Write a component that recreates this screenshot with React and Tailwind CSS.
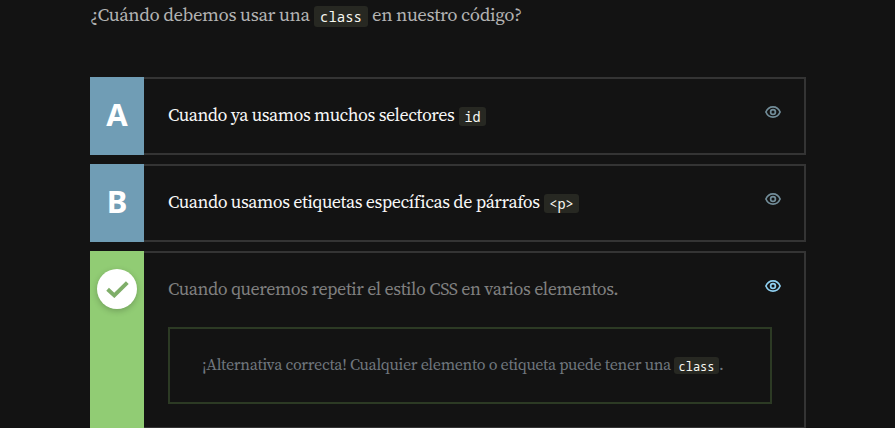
function Code({ children, className }) {
  return (
    <code
      className={`inline-flex shrink-0 items-center justify-center rounded-[3px] bg-[#272822] font-['Noto_Sans_Mono','DejaVu_Sans_Mono',monospace] tracking-normal text-[#f8f8f2] ${className}`}
    >
      {children}
    </code>
  );
}

function Eye({ className }) {
  return (
    <svg className={`h-3 w-4 shrink-0 ${className}`} viewBox="0 0 16 12" fill="none" stroke="currentColor" strokeWidth="1.7">
      <path d="M.9 6C2.300 2.700 5 .9 8 .9s5.700 1.800 7.100 5.100C13.700 9.300 11 11.100 8 11.100S2.300 9.300.9 6Z" />
      <circle cx="8" cy="6" r="2.400" />
    </svg>
  );
}

function Check() {
  return (
    <span className="mt-[18px] flex h-10 w-10 items-center justify-center rounded-full bg-white shadow-[0_2px_6px_rgba(0,0,0,0.22)]">
      <svg className="h-[17px] w-[23px]" viewBox="0 0 23 17" fill="none" stroke="#7fae69" strokeWidth="3.900">
        <path d="M1.600 8.200 8.300 14.400 21.300 1.600" />
      </svg>
    </span>
  );
}

function Letter({ children }) {
  return (
    <div className="flex h-[78px] w-[54px] shrink-0 items-center justify-center bg-[#709db5] pb-1 font-['Noto_Sans',sans-serif] text-[31px] leading-none font-bold text-white">
      {children}
    </div>
  );
}

function Option({ letter, text, textClass, code, codeClass }) {
  return (
    <section className="flex h-[78px]">
      <Letter>{letter}</Letter>
      <div className="flex flex-1 border-y-2 border-r-2 border-[#343434] pt-[20px] pr-[23px] pl-6">
        <p className="flex flex-1 items-start text-[18px] leading-[31px] whitespace-nowrap text-[#f8f8f8]">
          <span className={textClass}>{text}</span>
          <Code className={codeClass}>{code}</Code>
        </p>
        <Eye className="mt-[7px] text-[#728d99]" />
      </div>
    </section>
  );
}

export default function App() {
  return (
    <main className="h-[428px] w-[895px] overflow-hidden bg-[#131313] pl-[90px] font-['Source_Serif_4','Liberation_Serif',serif]">
      <div className="flex h-[77px] items-start text-[18.700px] leading-[30px] whitespace-nowrap text-[#b3b3b3]">
        <span className="w-[224px] tracking-[-0.370px]">¿Cuándo debemos usar una</span>
        <Code className="mt-[6px] h-[21px] w-[54px] text-[14px]">class</Code>
        <span className="ml-1 tracking-[-0.370px]">en nuestro código?</span>
      </div>

      <div className="flex w-[716px] flex-col gap-[9px]">
        <Option
          letter="A"
          text="Cuando ya usamos muchos selectores"
          textClass="w-[291px] tracking-[-0.450px]"
          code="id"
          codeClass="mt-2 h-[19px] w-[27px] pt-px text-[13.500px]"
        />
        <Option
          letter="B"
          text="Cuando usamos etiquetas específicas de párrafos"
          textClass="w-[376px] tracking-[-0.440px]"
          code="<p>"
          codeClass="mt-2 h-[19px] w-[35px] pt-px text-[13.500px]"
        />

        <section className="flex h-[178px]">
          <div className="flex w-[54px] shrink-0 justify-center bg-[#91cc74]">
            <Check />
          </div>
          <div className="flex-1 border-y-2 border-r-2 border-[#343434] pt-[20px] pl-6">
            <div className="flex pr-[23px]">
              <p className="flex-1 text-[18px] leading-[31px] tracking-[-0.420px] whitespace-nowrap text-[#808080]">
                Cuando queremos repetir el estilo CSS en varios elementos.
              </p>
              <Eye className="mt-[7px] text-[#8ecff0]" />
            </div>
            <div className="mt-[23px] flex h-[77px] w-[604px] items-start border-2 border-[#2c3a24] pt-[21px] pl-8 text-[16px] leading-[29px] whitespace-nowrap text-[#70777e]">
              <span className="w-[472px] tracking-[-0.310px]">¡Alternativa correcta! Cualquier elemento o etiqueta puede tener una</span>
              <Code className="mt-[7px] h-[17px] w-[45px] pt-px text-[12px]">class</Code>
              <span>.</span>
            </div>
          </div>
        </section>
      </div>
    </main>
  );
}
